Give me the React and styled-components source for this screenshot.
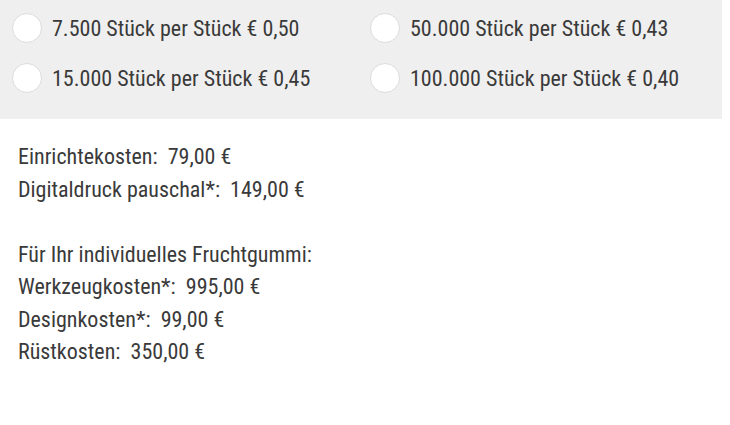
import React from 'react'
import styled, { createGlobalStyle } from 'styled-components'

const GlobalStyle = createGlobalStyle`
  html, body {
    margin: 0;
    padding: 0;
    background: #fff;
  }
  body {
    font-family: Roboto, "Open Sans", "Liberation Sans", sans-serif;
    font-stretch: condensed;
    color: #3a3a3a;
  }
`

const Options = styled.div`
  display: grid;
  grid-template-columns: 358px 1fr;
  row-gap: 20px;
  width: 722px;
  box-sizing: border-box;
  padding: 13px 0 26px 12px;
  background: #efefef;
`

const Option = styled.label`
  display: flex;
  align-items: center;
  gap: 10px;
  height: 30px;
  font-size: 22px;
  cursor: pointer;
`

const Radio = styled.span`
  flex: none;
  width: 28px;
  height: 28px;
  border-radius: 50%;
  background: #fff;
  border: 1px solid #dcdcdc;
`

const Costs = styled.div`
  padding: 22px 0 0 18px;
  font-size: 22px;
  line-height: 32.5px;
`

const Group = styled.div`
  & + & {
    margin-top: 32.5px;
  }
`

const Line = styled.div`
  white-space: pre;
`

const options = [
  '7.500 Stück per Stück € 0,50',
  '50.000 Stück per Stück € 0,43',
  '15.000 Stück per Stück € 0,45',
  '100.000 Stück per Stück € 0,40',
]

export default function App () {
  return (
    <>
      <GlobalStyle />
      <Options>
        {options.map(text => (
          <Option key={text}>
            <Radio />
            {text}
          </Option>
        ))}
      </Options>
      <Costs>
        <Group>
          <Line>Einrichtekosten:  79,00 €</Line>
          <Line>Digitaldruck pauschal*:  149,00 €</Line>
        </Group>
        <Group>
          <Line>Für Ihr individuelles Fruchtgummi:</Line>
          <Line>Werkzeugkosten*:  995,00 €</Line>
          <Line>Designkosten*:  99,00 €</Line>
          <Line>Rüstkosten:  350,00 €</Line>
        </Group>
      </Costs>
    </>
  )
}
